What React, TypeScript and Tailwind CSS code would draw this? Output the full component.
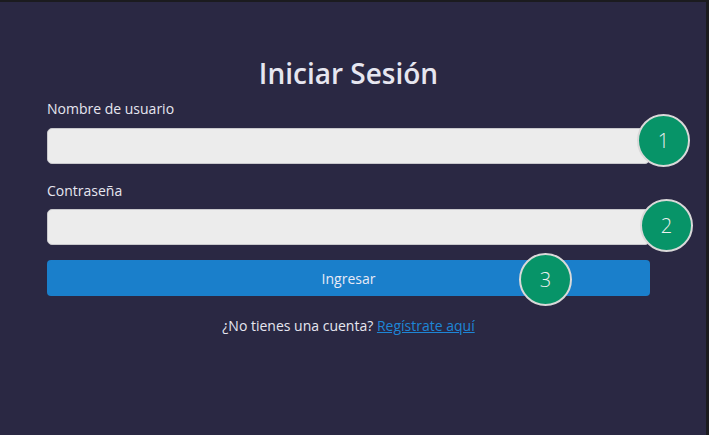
import React from "react";

function Badge({ n, className }: { n: number; className: string }) {
  return (
    <div
      className={
        "absolute flex h-[53px] w-[53px] items-center justify-center rounded-full border-2 border-[#d9d9d9] bg-[#079468] text-[20px] font-light text-[#f0f0f0] " +
        className
      }
      style={{ fontFamily: "'Open Sans', sans-serif" }}
    >
      {n}
    </div>
  );
}

export default function App() {
  return (
    <div
      className="h-[435px] w-[709px] overflow-hidden border-t-2 border-r-[3px] border-[#1b1b1f] bg-[#2a2843]"
      style={{ fontFamily: "'Open Sans', 'Noto Sans', sans-serif" }}
    >
      <div className="relative ml-[47px] flex w-[603px] flex-col pt-[53px]">
        <h1 className="text-center text-[28px] font-semibold leading-[36px] text-[#e6e6f0]">
          Iniciar Sesión
        </h1>
        <label className="mt-[8px] block text-[14px] leading-[20px] text-[#e6e6f0]">
          Nombre de usuario
        </label>
        <div className="mt-[9px] h-[36px] w-full rounded-[5px] border border-[#c8c8cc] bg-[#ececec]" />
        <label className="mt-[17px] block text-[14px] leading-[20px] text-[#e6e6f0]">
          Contraseña
        </label>
        <div className="mt-[8px] h-[36px] w-full rounded-[5px] border border-[#c8c8cc] bg-[#ececec]" />
        <button className="mt-[15px] flex h-[36px] w-full items-center justify-center rounded-[4px] bg-[#1a7fcb] text-[14px] text-[#e8eaf6]">
          Ingresar
        </button>
        <p className="mt-[20px] text-center text-[14px] leading-[20px] text-[#e6e6f0]">
          ¿No tienes una cuenta?{" "}
          <a href="#" className="text-[#1e86d6] underline">
            Regístrate aquí
          </a>
        </p>
        <Badge n={1} className="left-[590px] top-[112px]" />
        <Badge n={2} className="left-[593px] top-[197px]" />
        <Badge n={3} className="left-[472px] top-[251px]" />
      </div>
    </div>
  );
}
